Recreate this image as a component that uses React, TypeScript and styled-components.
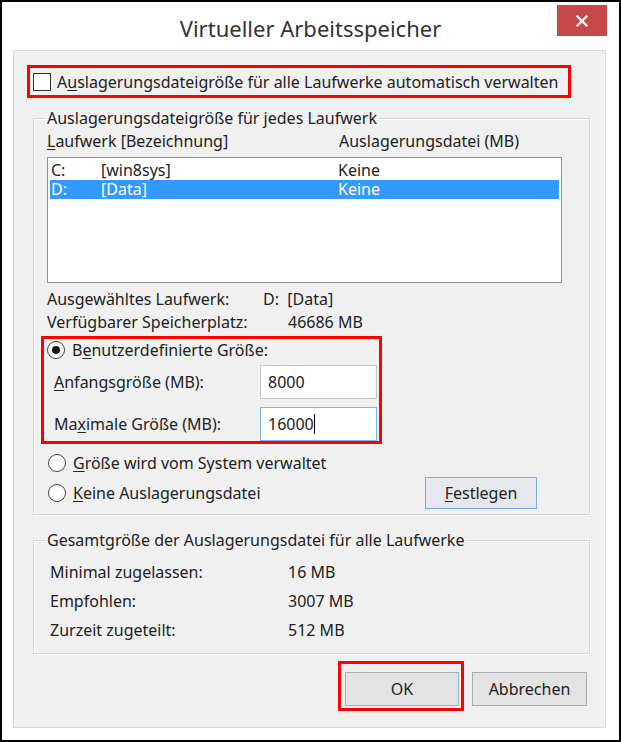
import styled, { createGlobalStyle } from "styled-components";

const GlobalStyle = createGlobalStyle`
  html, body {
    margin: 0;
    padding: 0;
    background: #fff;
  }
  body {
    font-family: "Noto Sans", "Open Sans", sans-serif;
    font-size: 16px;
    color: #222;
  }
  * {
    box-sizing: border-box;
  }
`;

const Window = styled.div`
  width: 621px;
  height: 742px;
  border: 2px solid #000;
  background: #fff;
  display: flex;
  flex-direction: column;
`;

const TitleBar = styled.div`
  height: 48px;
  display: grid;
  grid-template-columns: 1fr auto 1fr;
  align-items: start;
`;

const Title = styled.h1`
  grid-column: 2;
  margin: 0;
  padding-top: 12px;
  font-size: 22px;
  line-height: 28px;
  font-weight: 400;
  color: #333;
`;

const CloseButton = styled.button`
  grid-column: 3;
  justify-self: end;
  margin: 3px 12px 0 0;
  width: 50px;
  height: 31px;
  padding: 0;
  border: none;
  background: #c7484b;
  display: flex;
  align-items: center;
  justify-content: center;
`;

const Client = styled.div`
  margin: 0 13px 12px 11px;
  height: 678px;
  background: #f0f0f0;
  border: 1px solid #dadada;
  display: flex;
  flex-direction: column;
`;

const Highlight = styled.div`
  border: 3px solid #f00;
`;

const AutoBox = styled(Highlight)`
  margin: 14px 0 0 13px;
  width: 544px;
  height: 33px;
  padding-left: 3px;
  display: flex;
  align-items: center;
  gap: 6px;
`;

const CustomBox = styled(Highlight)`
  margin: 5px 0 0 -6px;
  width: 341px;
  height: 108px;
  display: flex;
  flex-direction: column;
`;

const OkBox = styled(Highlight)`
  width: 126px;
  height: 50px;
  padding: 8px 0 0 4px;
`;

const Checkbox = styled.span`
  width: 18px;
  height: 18px;
  border: 1px solid #333;
  background: #fff;
  flex: none;
`;

const Key = styled.u`
  text-decoration-thickness: 1px;
  text-underline-offset: 2px;
`;

const Group = styled.fieldset<{ $inset: number; $top: number; $bottom: number }>`
  margin: ${(p) => p.$top}px 0 0 19px;
  width: 557px;
  min-width: 0;
  padding: 0 0 ${(p) => p.$bottom}px ${(p) => p.$inset}px;
  border: 1px solid #d6d6d6;
  box-shadow: inset 1px 1px 0 #fff, 1px 1px 0 #fff;
`;

const Legend = styled.legend<{ $shift: number }>`
  padding: 0 2px;
  margin-left: ${(p) => p.$shift}px;
  line-height: 18px;
`;

const HeaderRow = styled.div`
  margin-top: 5px;
  height: 18px;
  line-height: 18px;
  display: grid;
  grid-template-columns: 292px 1fr;
`;

const ListBox = styled.div`
  margin-top: 7px;
  width: 515px;
  height: 126px;
  border: 1px solid #8e8f8f;
  background: #fff;
  padding: 3px 2px;
`;

const ListRow = styled.div<{ $selected?: boolean }>`
  height: 19px;
  line-height: 19px;
  padding-left: 1px;
  display: grid;
  grid-template-columns: 50px 237px 1fr;
  background: ${(p) => (p.$selected ? "#3399ff" : "transparent")};
  color: ${(p) => (p.$selected ? "#fff" : "inherit")};
`;

const InfoRow = styled.div<{ $col: number; $top: number }>`
  margin-top: ${(p) => p.$top}px;
  height: 18px;
  line-height: 18px;
  display: grid;
  grid-template-columns: ${(p) => p.$col}px 1fr;
`;

const RadioRow = styled.div<{ $height: number; $top: number; $indent: number }>`
  margin-top: ${(p) => p.$top}px;
  height: ${(p) => p.$height}px;
  padding-left: ${(p) => p.$indent}px;
  display: flex;
  align-items: center;
  gap: 7px;
`;

const Radio = styled.span<{ $checked?: boolean }>`
  width: 18px;
  height: 18px;
  flex: none;
  border-radius: 50%;
  border: 1px solid #444;
  background: #fff;
  display: flex;
  align-items: center;
  justify-content: center;
  &::after {
    content: "";
    width: 8px;
    height: 8px;
    border-radius: 50%;
    background: ${(p) => (p.$checked ? "#1a1a1a" : "transparent")};
  }
`;

const SizeRow = styled.div<{ $top: number }>`
  margin-top: ${(p) => p.$top}px;
  padding-left: 10px;
  display: grid;
  grid-template-columns: 206px 117px;
  align-items: center;
`;

const TextBox = styled.div<{ $focused?: boolean }>`
  height: 34px;
  border: 1px solid ${(p) => (p.$focused ? "#7eb4ea" : "#c4c6cc")};
  background: #fff;
  padding-left: 7px;
  display: flex;
  align-items: center;
`;

const Caret = styled.span`
  width: 1px;
  height: 20px;
  background: #000;
`;

const SetRow = styled.div`
  margin-top: 4px;
  height: 32px;
  display: grid;
  grid-template-columns: 378px 112px;
  align-items: center;
`;

const Button = styled.button<{ $default?: boolean }>`
  height: 34px;
  padding: 0;
  font: inherit;
  color: #222;
  border: 1px solid ${(p) => (p.$default ? "#78ade2" : "#adadad")};
  background: ${(p) => (p.$default ? "#e5e9ee" : "#e3e3e3")};
`;

const SetButton = styled(Button)`
  height: 32px;
  width: 112px;
`;

const OkButton = styled(Button)`
  width: 114px;
`;

const CancelButton = styled(Button)`
  width: 115px;
  margin: 11px 0 0 8px;
`;

const TotalRow = styled.div`
  height: 29px;
  line-height: 29px;
  display: grid;
  grid-template-columns: 238px 1fr;
`;

const Totals = styled.div`
  padding-top: 9px;
`;

const Footer = styled.div`
  margin-top: 7px;
  padding-right: 18px;
  display: flex;
  justify-content: flex-end;
  align-items: flex-start;
`;

const drives = [
  { letter: "C:", label: "[win8sys]", size: "Keine" },
  { letter: "D:", label: "[Data]", size: "Keine", selected: true },
];

const totals = [
  ["Minimal zugelassen:", "16 MB"],
  ["Empfohlen:", "3007 MB"],
  ["Zurzeit zugeteilt:", "512 MB"],
];

export default function App() {
  return (
    <>
      <GlobalStyle />
      <Window>
        <TitleBar>
          <Title>Virtueller Arbeitsspeicher</Title>
          <CloseButton aria-label="Schließen">
            <svg width="12" height="12" viewBox="0 0 12 12">
              <path d="M1.5 1.5 L10.5 10.5 M10.5 1.5 L1.5 10.5" stroke="#fff" strokeWidth="2.2" strokeLinecap="square" />
            </svg>
          </CloseButton>
        </TitleBar>
        <Client>
          <AutoBox>
            <Checkbox />
            <span>
              A<Key>u</Key>slagerungsdateigröße für alle Laufwerke automatisch verwalten
            </span>
          </AutoBox>

          <Group $inset={13} $top={11} $bottom={5}>
            <Legend $shift={-2}>Auslagerungsdateigröße für jedes Laufwerk</Legend>
            <HeaderRow>
              <span>
                <Key>L</Key>aufwerk [Bezeichnung]
              </span>
              <span>Auslagerungsdatei (MB)</span>
            </HeaderRow>
            <ListBox>
              {drives.map((d) => (
                <ListRow key={d.letter} $selected={d.selected}>
                  <span>{d.letter}</span>
                  <span>{d.label}</span>
                  <span>{d.size}</span>
                </ListRow>
              ))}
            </ListBox>
            <InfoRow $col={216} $top={7}>
              <span>Ausgewähltes Laufwerk:</span>
              <span>D:&nbsp; [Data]</span>
            </InfoRow>
            <InfoRow $col={241} $top={5}>
              <span>Verfügbarer Speicherplatz:</span>
              <span>46686 MB</span>
            </InfoRow>
            <CustomBox>
              <RadioRow $height={22} $top={0} $indent={3}>
                <Radio $checked />
                <span>
                  B<Key>e</Key>nutzerdefinierte Größe:
                </span>
              </RadioRow>
              <SizeRow $top={4}>
                <span>
                  <Key>A</Key>nfangsgröße (MB):
                </span>
                <TextBox>8000</TextBox>
              </SizeRow>
              <SizeRow $top={8}>
                <span>
                  Ma<Key>x</Key>imale Größe (MB):
                </span>
                <TextBox $focused>
                  16000
                  <Caret />
                </TextBox>
              </SizeRow>
            </CustomBox>
            <RadioRow $height={20} $top={9} $indent={1}>
              <Radio />
              <span>
                <Key>G</Key>röße wird vom System verwaltet
              </span>
            </RadioRow>
            <SetRow>
              <RadioRow $height={20} $top={0} $indent={1}>
                <Radio />
                <span>
                  <Key>K</Key>eine Auslagerungsdatei
                </span>
              </RadioRow>
              <SetButton $default>
                <Key>F</Key>estlegen
              </SetButton>
            </SetRow>
          </Group>

          <Group $inset={16} $top={16} $bottom={8}>
            <Legend $shift={-5}>Gesamtgröße der Auslagerungsdatei für alle Laufwerke</Legend>
            <Totals>
              {totals.map(([label, value]) => (
                <TotalRow key={label}>
                  <span>{label}</span>
                  <span>{value}</span>
                </TotalRow>
              ))}
            </Totals>
          </Group>

          <Footer>
            <OkBox>
              <OkButton>OK</OkButton>
            </OkBox>
            <CancelButton>Abbrechen</CancelButton>
          </Footer>
        </Client>
      </Window>
    </>
  );
}
